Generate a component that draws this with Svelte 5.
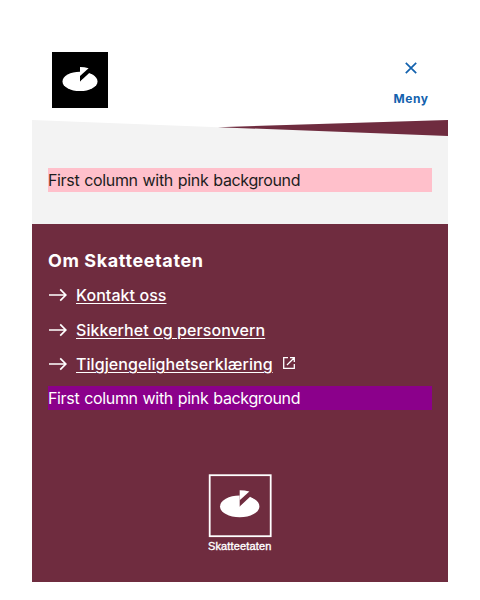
<script>
  const links = [
    { text: 'Kontakt oss', external: false },
    { text: 'Sikkerhet og personvern', external: false },
    { text: 'Tilgjengelighetserklæring', external: true }
  ];
</script>

{#snippet mark()}
  <ellipse cx="28" cy="29.4" rx="17.5" ry="9.7" />
  <path class="gap" d="M28 29.8V15L36.5 16L40 20.2Z" />
  <path d="M28 15.1Q32.5 15.2 36.6 16.2L28 24Z" />
  <path d="M28 29.6L37.2 20.9L42 24L36 31Z" />
{/snippet}

<div class="page">
  <header>
    <svg class="logo" viewBox="0 0 56 56" role="img" aria-label="Skatteetaten">
      <rect width="56" height="56" fill="#000" />
      {@render mark()}
    </svg>
    <button>
      <svg width="20" height="20" viewBox="0 0 20 20"><path d="M4.8 4.8L15.2 15.2M15.2 4.8L4.8 15.2" /></svg>
      <span>Meny</span>
    </button>
  </header>

  <main>
    <svg class="wedge" viewBox="0 0 416 16" preserveAspectRatio="none">
      <path fill="#fff" d="M0 0H416L186 7.2Z" />
      <path fill="#6f2c3f" d="M186 7.2L416 0V16Z" />
    </svg>
    <div class="pink">First column with pink background</div>
  </main>

  <footer>
    <h2>Om Skatteetaten</h2>
    <ul>
      {#each links as link}
        <li>
          <svg class="arrow" width="20" height="20" viewBox="0 0 20 20"><path d="M1 10H18M12.2 4.4L17.8 10L12.2 15.6" /></svg>
          <a href="#top">{link.text}</a>
          {#if link.external}
            <svg class="ext" width="16" height="16" viewBox="0 0 16 16"><path d="M7 2.7H2.7V13.3H13.3V9M9 2.7H13.3V7M13.3 2.7L6 10" /></svg>
          {/if}
        </li>
      {/each}
    </ul>
    <div class="purple">First column with pink background</div>
    <div class="brand">
      <svg width="64" height="80" viewBox="0 0 64 80">
        <rect x="1.7" y="1.2" width="61" height="61" fill="none" stroke="#fff" stroke-width="1.8" />
        <g class="foot" transform="translate(.2 -.7) scale(1.125)">{@render mark()}</g>
        <text x="0" y="75.5" textLength="63.3" lengthAdjust="spacing">Skatteetaten</text>
      </svg>
    </div>
  </footer>
</div>

<style>
  .page {
    margin: 32px;
    width: 416px;
    font-family: Inter, sans-serif;
    font-size: 16px;
    line-height: 24px;
    color: #1d1d1d;
  }
  header {
    height: 88px;
    box-sizing: border-box;
    padding: 20px 20px 0;
    display: flex;
    justify-content: space-between;
    align-items: flex-start;
  }
  svg { display: block; flex: none; }
  .logo { width: 56px; height: 56px; fill: #fff; }
  .gap { fill: #000; }
  .foot { fill: #fff; }
  .foot .gap { fill: #6f2c3f; }
  button {
    border: 0;
    background: none;
    padding: 6px 0 0;
    display: flex;
    flex-direction: column;
    align-items: center;
    gap: 11px;
    color: #1362ae;
    font: 700 12px/20px Inter, sans-serif;
    letter-spacing: 0.6px;
  }
  button span { margin-right: -0.6px; }
  button path { stroke: currentColor; stroke-width: 1.7; fill: none; }
  main { background: #f3f3f3; height: 104px; }
  .wedge { width: 416px; height: 16px; }
  .pink, .purple { letter-spacing: -0.35px; word-spacing: 0.8px; }
  .pink { background: pink; margin: 32px 16px 0; }
  footer {
    background: #6f2c3f;
    color: #fff;
    height: 358px;
    box-sizing: border-box;
    padding: 24px 16px 0;
  }
  h2 { margin: 0; font-size: 18px; line-height: 26px; font-weight: 700; letter-spacing: 0.6px; }
  ul {
    margin: 9px 0 0;
    padding: 0;
    list-style: none;
    display: flex;
    flex-direction: column;
    gap: 10.5px;
  }
  li { display: flex; align-items: center; height: 24px; }
  .arrow { margin-right: 8px; }
  .arrow path { fill: none; stroke: #fff; stroke-width: 1.7; }
  .ext { margin-left: 8px; margin-top: -3px; }
  .ext path { fill: none; stroke: #fff; stroke-width: 1.3; }
  a {
    color: #fff;
    font-weight: 500;
    letter-spacing: 0.06px;
    text-decoration: underline;
    text-decoration-thickness: 1px;
    text-underline-offset: 2px;
  }
  .purple { background: darkmagenta; margin-top: 10px; }
  .brand { display: flex; justify-content: center; margin-top: 64px; }
  text { fill: #fff; stroke: #fff; stroke-width: 0.35px; font: 400 11px "Liberation Sans", Arial, sans-serif; }
</style>
